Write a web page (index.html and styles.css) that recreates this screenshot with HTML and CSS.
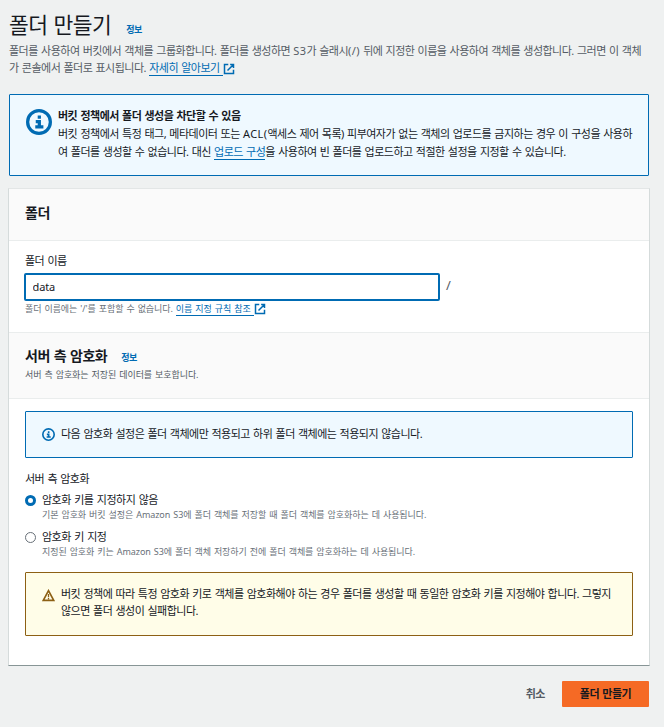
FILE: index.html
```html
<!DOCTYPE html>
<html lang="ko">
<head>
<meta charset="utf-8">
<title>폴더 만들기</title>
<link rel="stylesheet" href="styles.css">
</head>
<body>
<svg class="sprite" aria-hidden="true">
  <symbol id="external" viewBox="0 0 16 16"><path d="M7 2H2v12h12V9M9.500 2h4.500v4.500M14 2L6 10" fill="none" stroke="currentColor" stroke-width="2"/></symbol>
  <symbol id="info" viewBox="0 0 16 16"><circle cx="8" cy="8" r="7" fill="none" stroke="currentColor" stroke-width="2"/><path d="M8.200 4v2M6 7.800h2.200V11M5.700 11h5" fill="none" stroke="currentColor" stroke-width="2"/></symbol>
  <symbol id="warning" viewBox="0 0 16 16"><path d="M8 2L1.600 14h12.800z" fill="none" stroke="currentColor" stroke-width="2"/><path d="M8 6v4M8 11v1.800" fill="none" stroke="currentColor" stroke-width="1.600"/></symbol>
</svg>
<main class="page">
  <header class="page-header">
    <div class="title-row"><h1>폴더 만들기</h1><a class="info-link">정보</a></div>
    <p class="description">폴더를 사용하여 버킷에서 객체를 그룹화합니다. 폴더를 생성하면 <span class="latin">S3</span>가 슬래시<span class="latin">(/)</span> 뒤에 지정한 이름을 사용하여 객체를 생성합니다. 그러면 이 객체<br>가 콘솔에서 폴더로 표시됩니다. <a class="link">자세히 알아보기 </a><svg class="ext"><use href="#external"/></svg></p>
  </header>

  <section class="alert alert-main">
    <svg class="icon-large"><use href="#info"/></svg>
    <div>
      <h2>버킷 정책에서 폴더 생성을 차단할 수 있음</h2>
      <p>버킷 정책에서 특정 태그, 메타데이터 또는 <span class="latin">ACL(</span>액세스 제어 목록) 피부여자가 없는 객체의 업로드를 금지하는 경우 이 구성을 사용하<br>여 폴더를 생성할 수 없습니다. 대신 <a class="link">업로드 구성</a>을 사용하여 빈 폴더를 업로드하고 적절한 설정을 지정할 수 있습니다.</p>
    </div>
  </section>

  <section class="panel">
    <header class="panel-header folder-header"><h2>폴더</h2></header>
    <div class="folder-body">
      <label for="name">폴더 이름</label>
      <div class="name-row"><input id="name" type="text" value="data"><span>/</span></div>
      <p class="hint">폴더 이름에는 '/'를 포함할 수 없습니다. <a class="link">이름 지정 규칙 참조 </a><svg class="ext"><use href="#external"/></svg></p>
    </div>
    <header class="panel-header encryption-header">
      <div class="title-row"><h2>서버 측 암호화</h2><a class="info-link">정보</a></div>
      <p class="hint">서버 측 암호화는 저장된 데이터를 보호합니다.</p>
    </header>
    <div class="encryption-body">
      <div class="alert alert-inline"><svg class="icon-small"><use href="#info"/></svg><p>다음 암호화 설정은 폴더 객체에만 적용되고 하위 폴더 객체에는 적용되지 않습니다.</p></div>
      <p class="group-label">서버 측 암호화</p>
      <div class="option">
        <span class="radio radio-on"></span>
        <div><p class="option-title">암호화 키를 지정하지 않음</p><p class="hint">기본 암호화 버킷 설정은 Amazon S3에 폴더 객체를 저장할 때 폴더 객체를 암호화하는 데 사용됩니다.</p></div>
      </div>
      <div class="option">
        <span class="radio"></span>
        <div><p class="option-title">암호화 키 지정</p><p class="hint">지정된 암호화 키는 Amazon S3에 폴더 객체 저장하기 전에 폴더 객체를 암호화하는 데 사용됩니다.</p></div>
      </div>
      <div class="alert alert-warning"><svg class="icon-small"><use href="#warning"/></svg><p>버킷 정책에 따라 특정 암호화 키로 객체를 암호화해야 하는 경우 폴더를 생성할 때 동일한 암호화 키를 지정해야 합니다. 그렇지<br>않으면 폴더 생성이 실패합니다.</p></div>
    </div>
  </section>

  <footer class="actions"><button class="cancel">취소</button><button class="submit">폴더 만들기</button></footer>
</main>
</body>
</html>
```
FILE: styles.css
```css
* { box-sizing: border-box; margin: 0; padding: 0; }
body {
  background: #eff1f1;
  color: #16191f;
  font: 11px/17.5px "Noto Sans", "Noto Sans CJK KR", sans-serif;
  letter-spacing: -0.5px;
  word-spacing: 0.8px;
  white-space: nowrap;
}
.sprite { display: none; }
.page { width: 664px; height: 727px; padding: 10px 14px 0 8px; overflow: hidden; }
.page-header { height: 84px; padding-left: 1px; }
.title-row { display: flex; align-items: baseline; }
h1 { font-size: 21.5px; line-height: 29px; font-weight: 400; letter-spacing: -0.5px; }
.info-link { color: #006bb3; font-size: 9px; font-weight: 700; line-height: 12px; margin-left: 15px; }
.description { color: #545b64; margin-top: 3px; line-height: 17px; }
.latin { letter-spacing: 0.4px; }
.link { color: #006bb3; border-bottom: 1px solid #006bb3; white-space: pre; }
.ext { width: 12px; height: 12px; color: #006bb3; vertical-align: -3px; }

.alert { display: flex; border: 1px solid #006bb3; background: #eff9ff; border-radius: 1px; }
.alert-main { height: 82px; margin: 0 1px 12px 1px; padding: 12px 0 0 16px; }
.alert-main h2 { font-size: 11px; line-height: 18px; }
.icon-large { width: 26px; height: 26px; color: #006bb3; margin: 2px 6px 0 0; flex: none; }
.icon-small { width: 13px; height: 13px; color: #006bb3; margin: 4px 6px 0 0; flex: none; }

.panel { height: 478px; background: #fff; border: 1px solid #d5dbdb; border-top-color: #e3e6e6; border-bottom-color: #879596; }
.panel-header { background: #fafafa; border-bottom: 1px solid #eaeded; padding-left: 16px; }
.panel-header h2 { font-size: 14px; line-height: 20px; }
.folder-header { height: 52px; padding-top: 14px; }
.folder-body { height: 91px; padding: 11px 0 0 16px; }
.folder-body label { display: block; }
.name-row { display: flex; gap: 6px; margin: 3px 0 0 -1px; color: #545b64; }
.name-row span { font-size: 13px; line-height: 24px; }
input { width: 416px; height: 28px; border: 2px solid #006bb3; border-radius: 2px; padding: 0 6.500px; font: inherit; letter-spacing: -0.1px; color: #16191f; outline: 0; }
.hint { color: #687078; font-size: 9px; line-height: 16px; letter-spacing: -0.08px; word-spacing: 0.8px; }
.encryption-header { height: 67px; border-top: 1px solid #eaeded; padding-top: 13px; }
.encryption-header .hint { color: #545b64; margin-top: 1px; }
.encryption-header .info-link { margin-left: 14px; }
.encryption-body { padding: 12px 16px 0; }
.alert-inline { height: 47px; padding: 13px 0 0 16px; }
.alert-inline .icon-small { margin-top: 3px; }
.group-label { margin: 12px 0 3px; }
.option { display: flex; height: 37px; }
.option-title { line-height: 17px; word-spacing: 1px; }
.option .hint { line-height: 15px; margin-top: -1px; }
.radio { width: 11px; height: 11px; border: 1px solid #687078; border-radius: 50%; margin: 4px 6px 0 0; flex: none; }
.radio-on { border: 3.5px solid #006bb3; }
.alert-warning { height: 64px; margin-top: 7px; padding: 12px 0 0 16px; border-color: #8d6014; background: #fffde8; }
.alert-warning .icon-small { color: #8d6014; }
.actions { display: flex; justify-content: flex-end; padding: 15px 1px 0 0; }
button { border: 0; height: 26px; font: inherit; font-weight: 700; letter-spacing: inherit; word-spacing: inherit; background: none; color: #545b64; }
.cancel { margin-right: 17px; }
.submit { width: 87px; background: #f56a25; color: #16191f; border-radius: 1px; }
```
